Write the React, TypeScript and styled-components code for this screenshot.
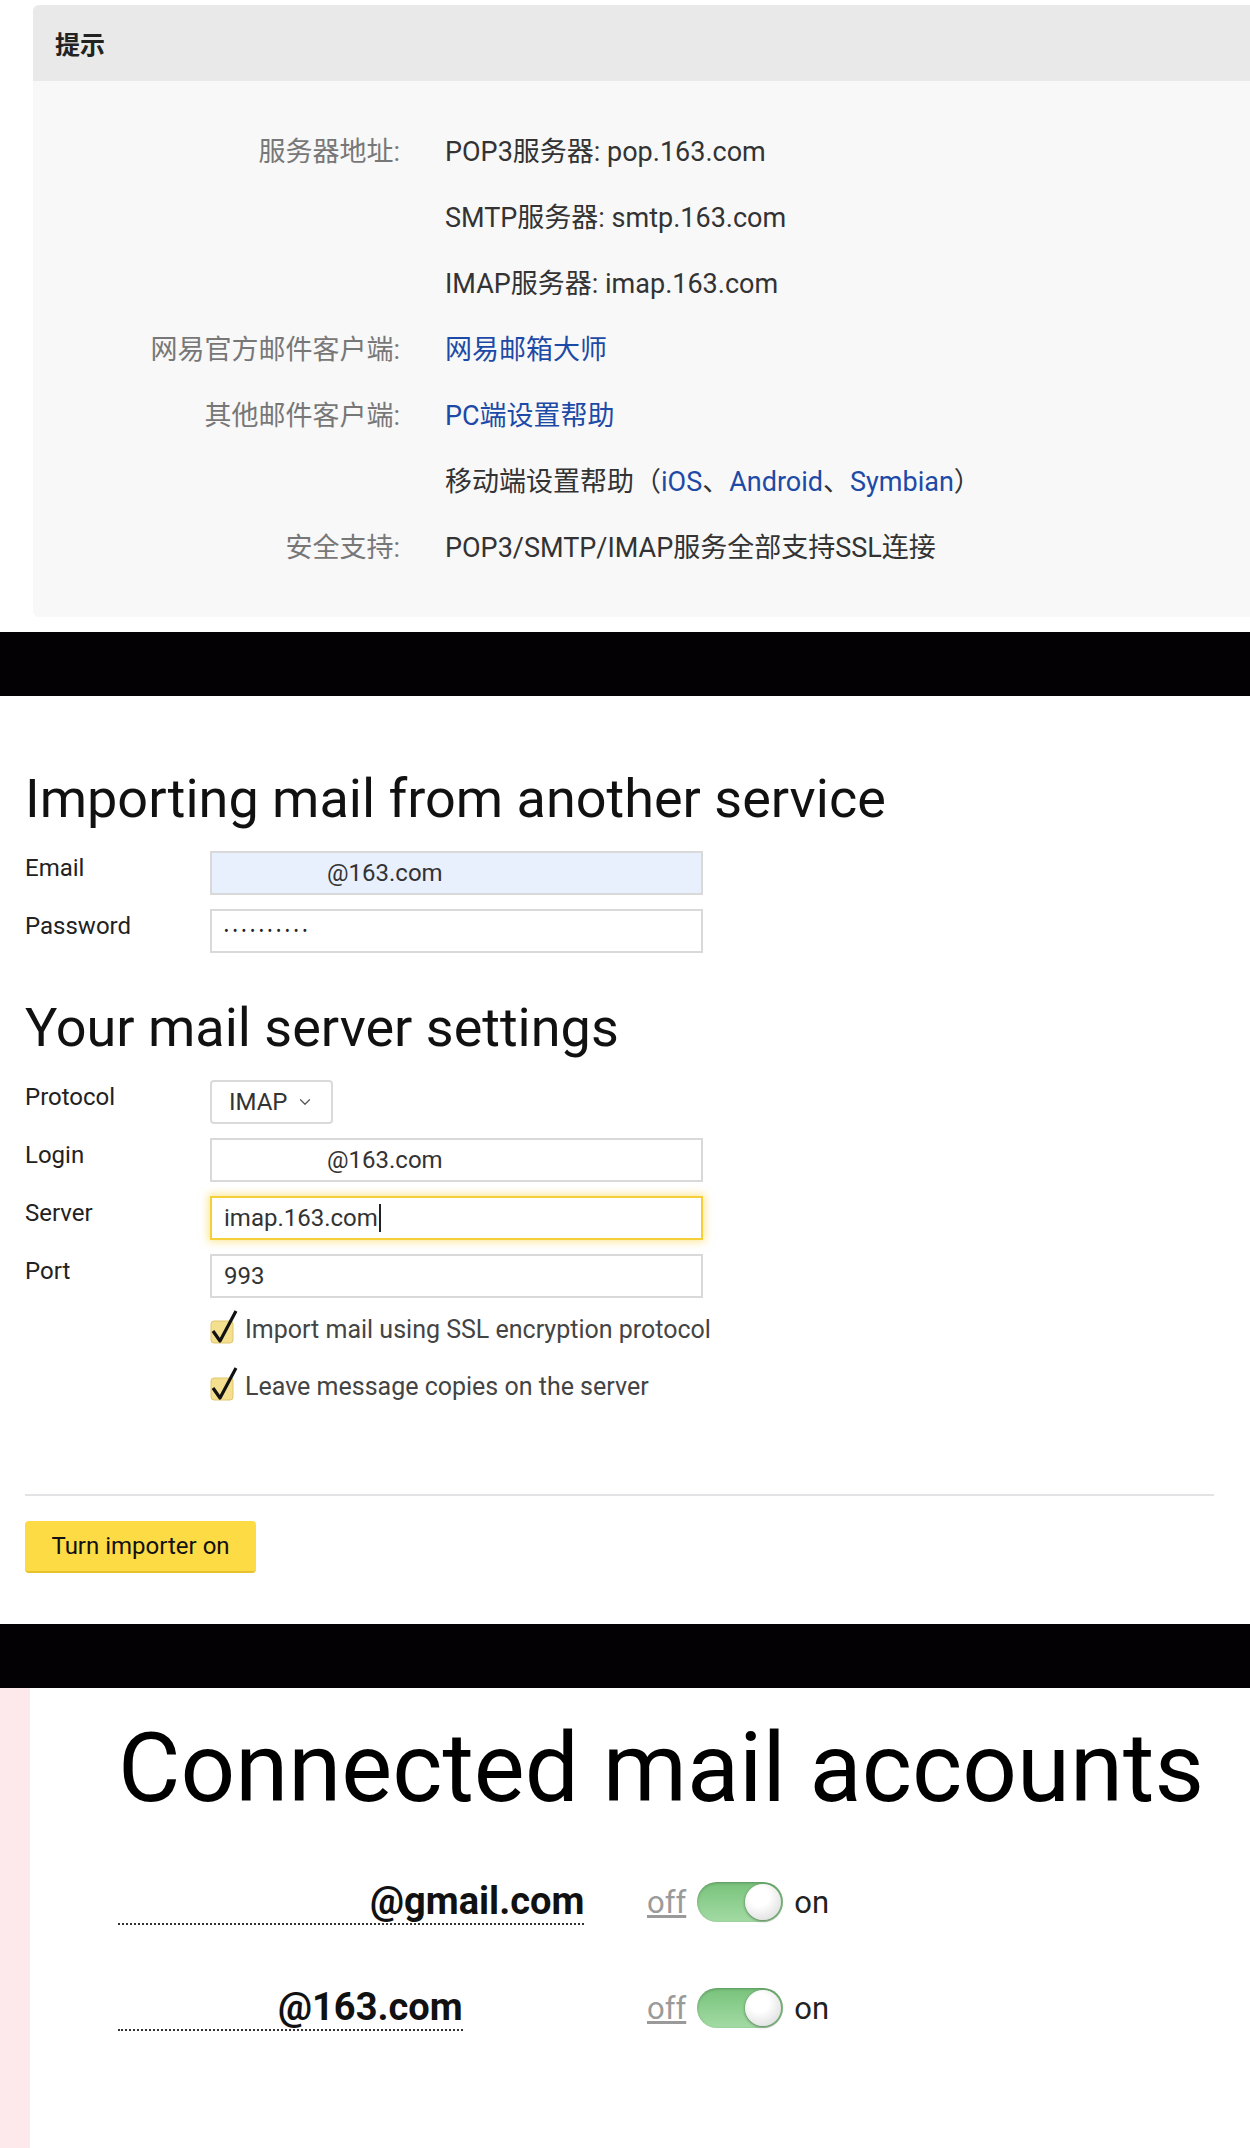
import React from "react";
import styled, { createGlobalStyle } from "styled-components";
import { ChevronDown } from "lucide-react";

const GlobalStyle = createGlobalStyle`
  body {
    margin: 0;
    background: #fff;
    font-family: Roboto, "Noto Sans CJK SC", sans-serif;
  }
`;

const Page = styled.div`
  width: 1250px;
`;

const Band = styled.div`
  height: 64px;
  background: #030104;
`;

/* ---------- tips panel ---------- */

const TipsSection = styled.section`
  height: 632px;
  padding: 5px 0 0 33px;
  box-sizing: border-box;
`;

const Panel = styled.div`
  height: 612px;
  background: #f8f8f8;
  border-radius: 6px 0 0 6px;
  overflow: hidden;
`;

const PanelHead = styled.div`
  height: 76px;
  background: #e9e9e9;
  display: flex;
  align-items: center;
  padding-left: 22px;
  font-size: 25px;
  font-weight: 700;
  color: #222;
`;

const InfoList = styled.div`
  display: grid;
  grid-template-columns: 367px 1fr;
  column-gap: 45px;
  grid-auto-rows: 66px;
  align-items: center;
  padding-top: 35px;
  font-size: 27px;
`;

const InfoLabel = styled.div`
  text-align: right;
  color: #777;
`;

const InfoValue = styled.div`
  color: #333;
`;

const Link = styled.a`
  color: #1d4aa6;
  text-decoration: none;
`;

/* ---------- import form ---------- */

const ImportSection = styled.section`
  height: 928px;
  padding: 71px 36px 0 25px;
  box-sizing: border-box;
`;

const Heading = styled.h2<{ $gap?: number }>`
  margin: ${(p) => p.$gap || 0}px 0 20px;
  font-size: 54px;
  font-weight: 400;
  line-height: 64px;
  color: #111;
`;

const Form = styled.div`
  display: flex;
  flex-direction: column;
  gap: 14px;
`;

const Row = styled.div`
  display: flex;
  align-items: flex-start;
`;

const FieldLabel = styled.div`
  width: 185px;
  flex: none;
  font-size: 24px;
  line-height: 34px;
  color: #222;
`;

const Field = styled.div<{ $tone?: "filled" | "focus" }>`
  width: 493px;
  height: 44px;
  box-sizing: border-box;
  display: flex;
  align-items: center;
  padding: 0 12px;
  font-size: 24px;
  color: #333;
  border: 2px solid
    ${(p) => (p.$tone === "focus" ? "#f4cf3a" : "#d9d9d9")};
  background: ${(p) => (p.$tone === "filled" ? "#e8f0fe" : "#fff")};
  box-shadow: ${(p) =>
    p.$tone === "focus" ? "0 0 8px 2px rgba(252, 214, 70, 0.55)" : "none"};
`;

const Mask = styled.span<{ $w: number }>`
  display: inline-block;
  width: ${(p) => p.$w}px;
`;

const Dots = styled.span`
  font-size: 14px;
  letter-spacing: 4px;
  color: #222;
`;

const Caret = styled.span`
  display: inline-block;
  width: 2px;
  height: 28px;
  background: #222;
  margin-left: 1px;
`;

const Select = styled.div`
  height: 44px;
  width: 123px;
  box-sizing: border-box;
  border: 2px solid #dadada;
  border-radius: 4px;
  display: flex;
  align-items: center;
  gap: 8px;
  padding-left: 17px;
  font-size: 24px;
  color: #333;
`;

const Checks = styled.div`
  display: flex;
  flex-direction: column;
  gap: 17px;
  margin: 7px 0 0 185px;
`;

const CheckRow = styled.label`
  display: flex;
  align-items: flex-end;
  height: 40px;
  gap: 3px;
  font-size: 25px;
  color: #444;
  line-height: 30px;
`;

const Divider = styled.hr`
  margin: 92px 0 0;
  border: none;
  height: 2px;
  background: #e3e3e6;
`;

const YellowButton = styled.button`
  margin-top: 25px;
  height: 52px;
  width: 231px;
  border: none;
  border-bottom: 2px solid #e8c22e;
  border-radius: 4px;
  background: #fddb45;
  font-family: Roboto, sans-serif;
  font-size: 24px;
  color: #111;
  padding: 0;
`;

function CheckIcon() {
  return (
    <svg width="32" height="36" viewBox="0 0 32 36">
      <rect x="1" y="12" width="22" height="22" rx="3" fill="#f4df8e" stroke="#e0c76f" />
      <path d="M3 22 L10 32 L26 2" fill="none" stroke="#111" strokeWidth="3.2" strokeLinejoin="round" />
    </svg>
  );
}

/* ---------- connected accounts ---------- */

const AccountsSection = styled.section`
  height: 460px;
  box-sizing: border-box;
  border-left: 30px solid #fde9eb;
  padding: 24px 0 0 88px;
`;

const BigHeading = styled.h1`
  margin: 0 0 50px;
  font-size: 96px;
  font-weight: 400;
  line-height: 112px;
  color: #000;
`;

const Accounts = styled.div`
  display: grid;
  grid-template-columns: 518px auto auto auto;
  grid-auto-rows: 56px;
  row-gap: 50px;
  column-gap: 11px;
  align-items: center;
  justify-content: start;
`;

const AccountLink = styled.span`
  justify-self: start;
  font-size: 38px;
  font-weight: 700;
  line-height: 44px;
  color: #111;
  border-bottom: 2px dotted #333;
`;

const Off = styled.span`
  font-size: 31px;
  color: #9a9a9a;
  text-decoration: underline;
`;

const On = styled.span`
  font-size: 31px;
  color: #222;
`;

const Toggle = styled.span`
  width: 86px;
  height: 40px;
  border-radius: 20px;
  display: flex;
  justify-content: flex-end;
  align-items: center;
  padding-right: 2px;
  box-sizing: border-box;
  background: linear-gradient(#78c37b, #a3dba4);
  box-shadow: inset 0 1px 3px rgba(0, 0, 0, 0.25);
`;

const Knob = styled.span`
  width: 36px;
  height: 36px;
  border-radius: 50%;
  background: radial-gradient(circle at 40% 35%, #ffffff 30%, #d4d4d4);
  box-shadow: 0 1px 3px rgba(0, 0, 0, 0.45);
`;

const accounts = [
  { mask: 252, domain: "@gmail.com" },
  { mask: 160, domain: "@163.com" },
];

function App() {
  return (
    <Page>
      <GlobalStyle />
      <TipsSection>
        <Panel>
          <PanelHead>提示</PanelHead>
          <InfoList>
            <InfoLabel>服务器地址:</InfoLabel>
            <InfoValue>POP3服务器: pop.163.com</InfoValue>
            <InfoLabel />
            <InfoValue>SMTP服务器: smtp.163.com</InfoValue>
            <InfoLabel />
            <InfoValue>IMAP服务器: imap.163.com</InfoValue>
            <InfoLabel>网易官方邮件客户端:</InfoLabel>
            <InfoValue>
              <Link>网易邮箱大师</Link>
            </InfoValue>
            <InfoLabel>其他邮件客户端:</InfoLabel>
            <InfoValue>
              <Link>PC端设置帮助</Link>
            </InfoValue>
            <InfoLabel />
            <InfoValue>
              移动端设置帮助（<Link>iOS</Link>、<Link>Android</Link>、
              <Link>Symbian</Link>）
            </InfoValue>
            <InfoLabel>安全支持:</InfoLabel>
            <InfoValue>POP3/SMTP/IMAP服务全部支持SSL连接</InfoValue>
          </InfoList>
        </Panel>
      </TipsSection>

      <Band />

      <ImportSection>
        <Heading>Importing mail from another service</Heading>
        <Form>
          <Row>
            <FieldLabel>Email</FieldLabel>
            <Field $tone="filled">
              <Mask $w={103} />
              @163.com
            </Field>
          </Row>
          <Row>
            <FieldLabel>Password</FieldLabel>
            <Field>
              <Dots>••••••••••</Dots>
            </Field>
          </Row>
        </Form>

        <Heading $gap={43}>Your mail server settings</Heading>
        <Form>
          <Row>
            <FieldLabel>Protocol</FieldLabel>
            <Select>
              IMAP
              <ChevronDown size={18} strokeWidth={1.6} color="#555" />
            </Select>
          </Row>
          <Row>
            <FieldLabel>Login</FieldLabel>
            <Field>
              <Mask $w={103} />
              @163.com
            </Field>
          </Row>
          <Row>
            <FieldLabel>Server</FieldLabel>
            <Field $tone="focus">
              imap.163.com
              <Caret />
            </Field>
          </Row>
          <Row>
            <FieldLabel>Port</FieldLabel>
            <Field>993</Field>
          </Row>
        </Form>
        <Checks>
          <CheckRow>
            <CheckIcon />
            Import mail using SSL encryption protocol
          </CheckRow>
          <CheckRow>
            <CheckIcon />
            Leave message copies on the server
          </CheckRow>
        </Checks>
        <Divider />
        <YellowButton>Turn importer on</YellowButton>
      </ImportSection>

      <Band />

      <AccountsSection>
        <BigHeading>Connected mail accounts</BigHeading>
        <Accounts>
          {accounts.map((a) => (
            <React.Fragment key={a.domain}>
              <AccountLink>
                <Mask $w={a.mask} />
                {a.domain}
              </AccountLink>
              <Off>off</Off>
              <Toggle>
                <Knob />
              </Toggle>
              <On>on</On>
            </React.Fragment>
          ))}
        </Accounts>
      </AccountsSection>
    </Page>
  );
}

export default App;
